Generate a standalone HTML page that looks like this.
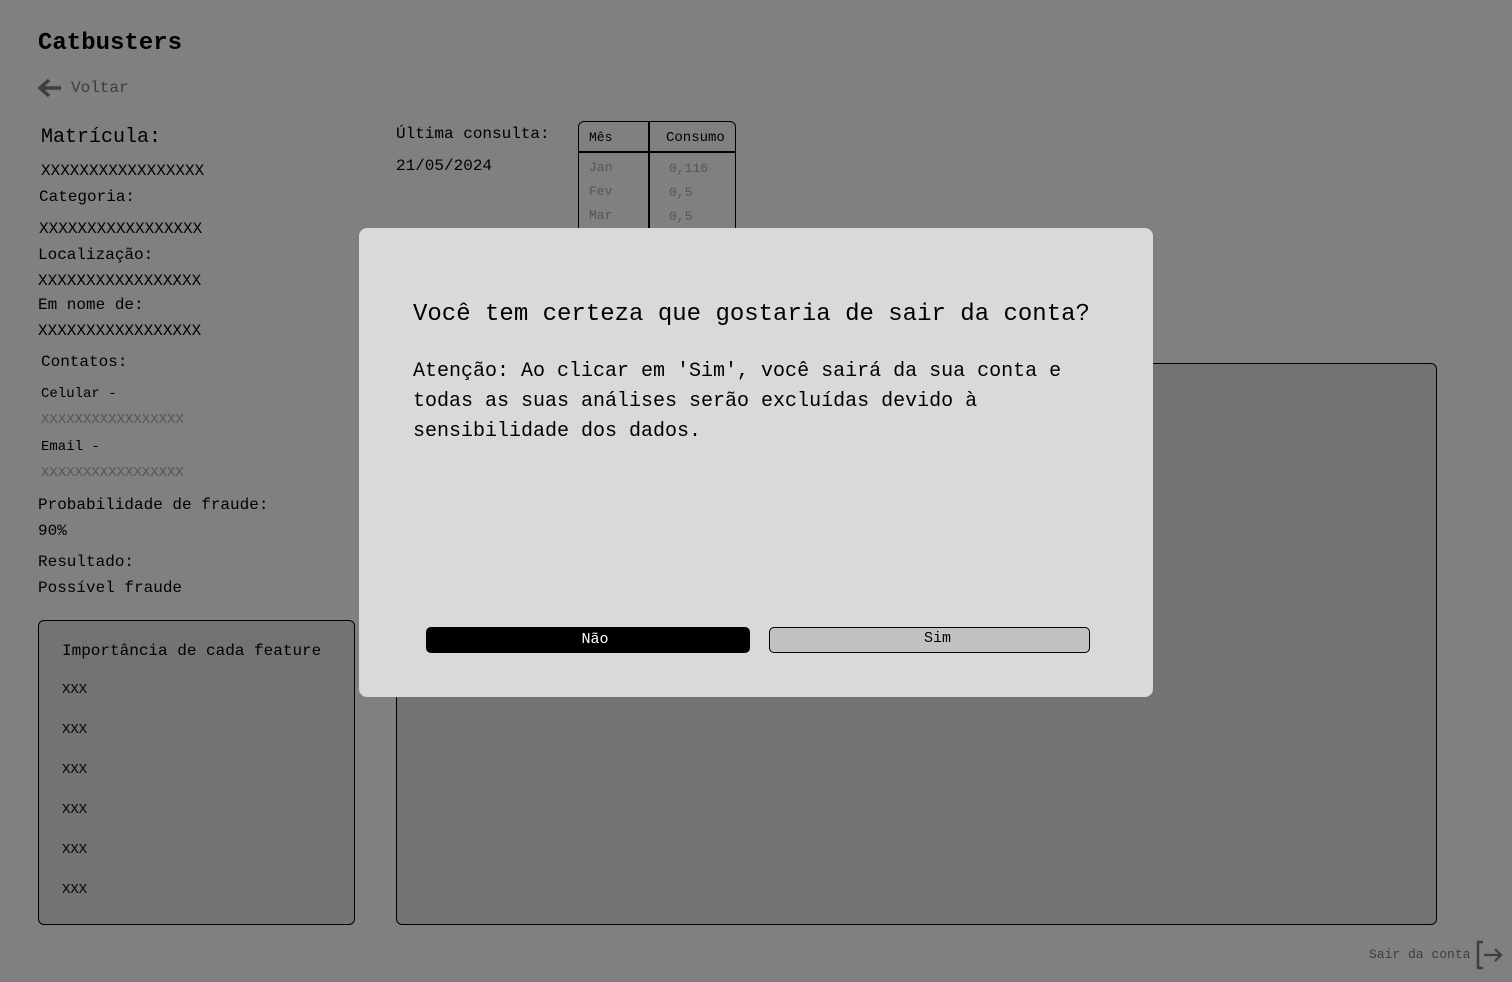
<!DOCTYPE html>
<html><head><meta charset="utf-8"><style>
*{margin:0;padding:0;box-sizing:border-box}
body{width:1512px;height:982px;background:#808080;font-family:"Liberation Mono",monospace;color:#000;position:relative;overflow:hidden}
.a{position:absolute;white-space:nowrap}
</style></head><body>
<div class="a" style="left:38px;top:30px;font-size:24px;font-weight:bold">Catbusters</div>
<svg class="a" style="left:37px;top:77px" width="26" height="22" viewBox="0 0 26 22"><path d="M24 11H4M12 3L3 11l9 8" stroke="#3e3e3e" stroke-width="3.5" fill="none"/></svg>
<div class="a" style="left:71px;top:79px;font-size:16px;color:#3e3e3e">Voltar</div>

<div class="a" style="left:41px;top:126px;font-size:20px">Matrícula:</div>
<div class="a" style="left:41px;top:162px;font-size:16px">XXXXXXXXXXXXXXXXX</div>
<div class="a" style="left:39px;top:188px;font-size:16px">Categoria:</div>
<div class="a" style="left:39px;top:220px;font-size:16px">XXXXXXXXXXXXXXXXX</div>
<div class="a" style="left:38px;top:246px;font-size:16px">Localização:</div>
<div class="a" style="left:38px;top:272px;font-size:16px">XXXXXXXXXXXXXXXXX</div>
<div class="a" style="left:38px;top:296px;font-size:16px">Em nome de:</div>
<div class="a" style="left:38px;top:322px;font-size:16px">XXXXXXXXXXXXXXXXX</div>
<div class="a" style="left:41px;top:353px;font-size:16px">Contatos:</div>
<div class="a" style="left:41px;top:386px;font-size:14px">Celular -</div>
<div class="a" style="left:41px;top:412px;font-size:14px;color:#555">XXXXXXXXXXXXXXXXX</div>
<div class="a" style="left:41px;top:439px;font-size:14px">Email -</div>
<div class="a" style="left:41px;top:465px;font-size:14px;color:#555">XXXXXXXXXXXXXXXXX</div>
<div class="a" style="left:38px;top:496px;font-size:16px">Probabilidade de fraude:</div>
<div class="a" style="left:38px;top:522px;font-size:16px">90%</div>
<div class="a" style="left:38px;top:553px;font-size:16px">Resultado:</div>
<div class="a" style="left:38px;top:579px;font-size:16px">Possível fraude</div>

<div class="a" style="left:396px;top:125px;font-size:16px">Última consulta:</div>
<div class="a" style="left:396px;top:157px;font-size:16px">21/05/2024</div>

<div class="a" style="left:578px;top:121px;width:158px;height:130px;border:1.5px solid #000;border-radius:6px 6px 0 0"></div>
<div class="a" style="left:648px;top:121px;width:1.5px;height:130px;background:#000"></div>
<div class="a" style="left:578px;top:151px;width:158px;height:1.5px;background:#000"></div>
<div class="a" style="left:589px;top:130px;font-size:13px">Mês</div>
<div class="a" style="left:666px;top:130px;font-size:14px">Consumo</div>
<div class="a" style="left:589px;top:160px;font-size:13px;color:#555">Jan</div>
<div class="a" style="left:669px;top:161px;font-size:13px;color:#555">0,116</div>
<div class="a" style="left:589px;top:184px;font-size:13px;color:#555">Fev</div>
<div class="a" style="left:669px;top:185px;font-size:13px;color:#555">0,5</div>
<div class="a" style="left:589px;top:208px;font-size:13px;color:#555">Mar</div>
<div class="a" style="left:669px;top:209px;font-size:13px;color:#555">0,5</div>

<div class="a" style="left:38px;top:620px;width:317px;height:305px;border:1.5px solid #000;border-radius:6px;background:#737373"></div>
<div class="a" style="left:62px;top:642px;font-size:16px">Importância de cada feature</div>
<div class="a" style="left:62px;top:682px;font-size:14px">XXX</div>
<div class="a" style="left:62px;top:722px;font-size:14px">XXX</div>
<div class="a" style="left:62px;top:762px;font-size:14px">XXX</div>
<div class="a" style="left:62px;top:802px;font-size:14px">XXX</div>
<div class="a" style="left:62px;top:842px;font-size:14px">XXX</div>
<div class="a" style="left:62px;top:882px;font-size:14px">XXX</div>

<div class="a" style="left:396px;top:363px;width:1041px;height:562px;border:1.5px solid #000;border-radius:6px;background:#737373"></div>

<div class="a" style="left:1369px;top:947px;font-size:13px;color:#3e3e3e">Sair da conta</div>
<svg class="a" style="left:1474px;top:940px" width="30" height="30" viewBox="0 0 30 30"><path d="M9 2H4v26h5" stroke="#3e3e3e" stroke-width="2.5" fill="none"/><path d="M10 15h17M21 9l6 6-6 6" stroke="#3e3e3e" stroke-width="2.2" fill="none"/></svg>

<div class="a" style="left:359px;top:228px;width:794px;height:469px;background:#d9d9d9;border-radius:8px"></div>
<div class="a" style="left:413px;top:301px;font-size:24px">Você tem certeza que gostaria de sair da conta?</div>
<div class="a" style="left:413px;top:357px;font-size:20px;line-height:30px;white-space:normal;width:700px">Atenção: Ao clicar em 'Sim', você sairá da sua conta e todas as suas análises serão excluídas devido à sensibilidade dos dados.</div>
<div class="a" style="left:426px;top:627px;width:324px;height:26px;background:#000;border-radius:5px;color:#fff;font-size:15px;text-align:center;line-height:26px;padding-left:14px">Não</div>
<div class="a" style="left:769px;top:627px;width:321px;height:26px;background:#c2c2c2;border:1.3px solid #000;border-radius:5px;font-size:15px;text-align:center;line-height:21px;padding-left:16px">Sim</div>
</body></html>
